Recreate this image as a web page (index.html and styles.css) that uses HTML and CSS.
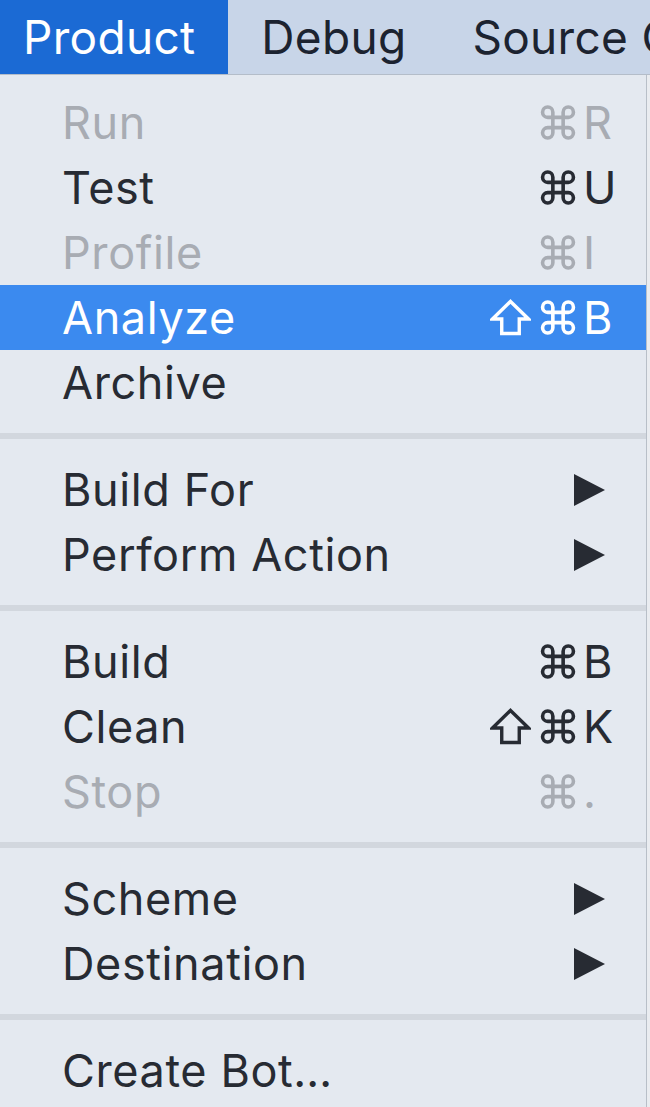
FILE: index.html
```html
<!DOCTYPE html>
<html lang="en">
<head>
    <meta charset="UTF-8">
    <meta name="viewport" content="width=device-width, initial-scale=1.0">
    <title>Product menu</title>
    <link rel="stylesheet" href="styles.css">
</head>
<body>
    <svg class="defs" aria-hidden="true">
        <symbol id="cmd" viewBox="1.8 1.8 20.4 20.4">
            <path d="M15 6v12a3 3 0 1 0 3-3H6a3 3 0 1 0 3 3V6a3 3 0 1 0-3 3h12a3 3 0 1 0-3-3" fill="none" stroke="currentColor" stroke-width="2.1"/>
        </symbol>
        <symbol id="shift" viewBox="0 0 42 38">
            <polygon points="21,2.5 39.5,20.5 30,20.5 30,35.5 12,35.5 12,20.5 2.5,20.5" fill="none" stroke="currentColor" stroke-width="3.5"/>
        </symbol>
    </svg>

    <div class="menubar">
        <span class="menubar-item active">Product</span>
        <span class="menubar-item">Debug</span>
        <span class="menubar-item">Source Control</span>
    </div>

    <div class="content">
        <div class="menu">
            <div class="menu-item disabled">
                <span class="label">Run</span>
                <span class="shortcut"><span class="mods"><svg class="cmd"><use href="#cmd"/></svg></span><span class="key">R</span></span>
            </div>
            <div class="menu-item">
                <span class="label">Test</span>
                <span class="shortcut"><span class="mods"><svg class="cmd"><use href="#cmd"/></svg></span><span class="key">U</span></span>
            </div>
            <div class="menu-item disabled">
                <span class="label">Profile</span>
                <span class="shortcut"><span class="mods"><svg class="cmd"><use href="#cmd"/></svg></span><span class="key">I</span></span>
            </div>
            <div class="menu-item selected">
                <span class="label">Analyze</span>
                <span class="shortcut"><span class="mods"><svg class="shift"><use href="#shift"/></svg><svg class="cmd"><use href="#cmd"/></svg></span><span class="key">B</span></span>
            </div>
            <div class="menu-item">
                <span class="label">Archive</span>
            </div>

            <div class="separator"></div>

            <div class="menu-item">
                <span class="label">Build For</span>
                <span class="arrow"></span>
            </div>
            <div class="menu-item">
                <span class="label">Perform Action</span>
                <span class="arrow"></span>
            </div>

            <div class="separator"></div>

            <div class="menu-item">
                <span class="label">Build</span>
                <span class="shortcut"><span class="mods"><svg class="cmd"><use href="#cmd"/></svg></span><span class="key">B</span></span>
            </div>
            <div class="menu-item">
                <span class="label">Clean</span>
                <span class="shortcut"><span class="mods"><svg class="shift"><use href="#shift"/></svg><svg class="cmd"><use href="#cmd"/></svg></span><span class="key">K</span></span>
            </div>
            <div class="menu-item disabled">
                <span class="label">Stop</span>
                <span class="shortcut"><span class="mods"><svg class="cmd"><use href="#cmd"/></svg></span><span class="key">.</span></span>
            </div>

            <div class="separator"></div>

            <div class="menu-item">
                <span class="label">Scheme</span>
                <span class="arrow"></span>
            </div>
            <div class="menu-item">
                <span class="label">Destination</span>
                <span class="arrow"></span>
            </div>

            <div class="separator"></div>

            <div class="menu-item">
                <span class="label">Create Bot…</span>
            </div>
        </div>
        <div class="backdrop"></div>
    </div>
</body>
</html>
```

FILE: styles.css
```css
body {
    margin: 0;
    width: 650px;
    height: 1107px;
    overflow: hidden;
    font-family: 'Inter', 'Liberation Sans', sans-serif;
    background: #e4e9f0;
    color: #272b33;
}
.defs {
    position: absolute;
    width: 0;
    height: 0;
}
.menubar {
    display: flex;
    height: 74px;
    background: #c8d5e8;
    border-bottom: 1px solid #b4bdc9;
    white-space: nowrap;
    overflow: hidden;
}
.menubar-item {
    display: flex;
    align-items: center;
    padding: 0 33px;
    font-size: 46px;
    letter-spacing: 0.3px;
    color: #1c2330;
}
.menubar-item:first-child {
    padding-left: 23px;
}
.menubar-item.active {
    background: #1b6ad4;
    color: #ffffff;
}
.content {
    display: flex;
    height: 1032px;
}
.menu {
    flex: 0 0 646px;
    padding-top: 15px;
    background: #e4e9f0;
    border-right: 1px solid #b8bfc8;
}
.backdrop {
    flex: 1;
    background: #e9ecf0;
}
.menu-item {
    display: flex;
    align-items: center;
    justify-content: space-between;
    height: 65px;
    padding: 0 33px 0 62px;
    font-size: 45px;
    letter-spacing: 0.6px;
}
.menu-item.disabled {
    color: #a8acb3;
}
.menu-item.selected {
    background: #3b8aef;
    color: #ffffff;
}
.shortcut {
    display: flex;
    align-items: center;
}
.mods {
    display: flex;
    align-items: center;
    gap: 9px;
    margin-right: 7px;
}
.cmd {
    width: 36px;
    height: 35px;
}
.shift {
    width: 41px;
    height: 37px;
}
.key {
    width: 30px;
}
.arrow {
    width: 0;
    height: 0;
    margin-right: 8px;
    border-left: 31px solid #272b33;
    border-top: 16px solid transparent;
    border-bottom: 16px solid transparent;
}
.separator {
    height: 6px;
    margin: 18px 0;
    background: #d2d7de;
}
```
